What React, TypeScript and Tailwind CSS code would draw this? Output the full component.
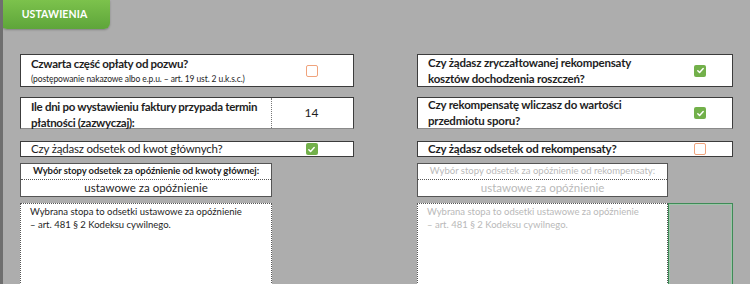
import React from 'react';

const font = { fontFamily: 'Lato, "Liberation Sans", sans-serif' };

function Box({ checked }: { checked: boolean }) {
  if (checked) {
    return (
      <span className="flex h-[12px] w-[12px] items-center justify-center rounded-[2px] bg-[#72b04a]">
        <svg width="9" height="9" viewBox="0 0 10 10" fill="none">
          <path d="M2 5.2l2 2 4-4.4" stroke="#fff" strokeWidth="1.6" strokeLinecap="round" strokeLinejoin="round" />
        </svg>
      </span>
    );
  }
  return <span className="block h-[12px] w-[12px] rounded-[2px] border-[1.5px] border-[#f0a37c] bg-white" />;
}

export default function App() {
  return (
    <div className="relative h-[284px] w-[750px] overflow-hidden bg-[#adadad] text-[#1e1e1e]" style={font}>
      <div className="absolute left-0 top-0 h-full w-[3px] bg-[#6f6f6f]" />

      {/* tab */}
      <div className="ml-[1px] flex h-[29px] w-[109px] items-center justify-center rounded-b-[6px] bg-gradient-to-b from-[#7cc24c] to-[#5ea53a] shadow-[0_1px_2px_rgba(0,0,0,0.25)]">
        <span className="mr-[2px] text-[10.5px] font-bold tracking-[0.1px] text-white">USTAWIENIA</span>
      </div>

      <div className="mt-[25px] flex">
        {/* left column */}
        <div className="ml-[20px] flex w-[334px] flex-col">
          <div className="flex h-[33px] items-center border border-[#3c3c3c] bg-white pl-[10px]">
            <div className="flex-1 leading-none">
              <div className="text-[11.5px] font-bold tracking-[-0.3px]">Czwarta część opłaty od pozwu?</div>
              <div className="mt-[5px] text-[8.5px] tracking-[-0.1px]">(postępowanie nakazowe albo e.p.u. – art. 19 ust. 2 u.k.s.c.)</div>
            </div>
            <div className="flex w-[82px] justify-center pr-[1px]">
              <Box checked={false} />
            </div>
          </div>

          <div className="mt-[10px] flex h-[32px] border border-b-[#8a8a8a] border-[#3c3c3c] bg-white">
            <div className="w-[250px] pl-[10px] pt-[1px] text-[11.5px] font-bold leading-[16px] tracking-[-0.3px]">
              Ile dni po wystawieniu faktury przypada termin
              <br />
              płatności (zazwyczaj):
            </div>
            <div className="flex flex-1 items-center justify-center border-l border-dotted border-[#777] pr-[2px] text-[12px]">14</div>
          </div>

          <div className="mt-[12px] flex h-[16px] items-center border border-[#3c3c3c] bg-white pl-[10px]">
            <div className="flex-1 text-[11.5px] leading-none tracking-[-0.2px]">Czy żądasz odsetek od kwot głównych?</div>
            <div className="flex w-[82px] justify-center pr-[1px]">
              <Box checked={true} />
            </div>
          </div>

          <div className="mt-[6px] flex h-[34px] w-[252px] flex-col border border-[#555] bg-white">
            <div className="flex h-[16px] items-center justify-center border-b border-dotted border-[#555] text-[9.5px] font-bold tracking-[-0.1px]">
              Wybór stopy odsetek za opóźnienie od kwoty głównej:
            </div>
            <div className="flex flex-1 items-center justify-center text-[11.5px] leading-none">ustawowe za opóźnienie</div>
          </div>

          <div className="mt-[6px] h-[90px] w-[252px] border border-dotted border-[#555] bg-white px-[9px] pt-[1px] text-[9.5px] leading-[13px]">
            Wybrana stopa to odsetki ustawowe za opóźnienie
            <br />– art. 481 § 2 Kodeksu cywilnego.
          </div>
        </div>

        {/* right column */}
        <div className="ml-[63px] flex w-[316px] flex-col">
          <div className="flex h-[33px] items-center border border-[#3c3c3c] bg-white pl-[10px]">
            <div className="flex-1 text-[11.5px] font-bold leading-[16px] tracking-[-0.2px]">
              Czy żądasz zryczałtowanej rekompensaty
              <br />
              kosztów dochodzenia roszczeń?
            </div>
            <div className="flex w-[60px] justify-center pr-[4px]">
              <Box checked={true} />
            </div>
          </div>

          <div className="mt-[10px] flex h-[32px] items-center border border-b-[#8a8a8a] border-[#3c3c3c] bg-white pl-[10px]">
            <div className="flex-1 text-[11.5px] font-bold leading-[16px] tracking-[-0.2px]">
              Czy rekompensatę wliczasz do wartości
              <br />
              przedmiotu sporu?
            </div>
            <div className="flex w-[60px] justify-center pr-[4px]">
              <Box checked={true} />
            </div>
          </div>

          <div className="mt-[12px] flex h-[16px] items-center border border-[#3c3c3c] bg-white pl-[10px]">
            <div className="flex-1 text-[11.5px] font-bold leading-none tracking-[-0.2px]">Czy żądasz odsetek od rekompensaty?</div>
            <div className="flex w-[60px] justify-center pr-[4px]">
              <Box checked={false} />
            </div>
          </div>

          <div className="mt-[6px] flex h-[34px] w-[251px] flex-col border border-[#555] bg-white text-[#b9b9b9]">
            <div className="flex h-[16px] items-center justify-center border-b border-dotted border-[#555] text-[9.5px]">
              Wybór stopy odsetek za opóźnienie od rekompensaty:
            </div>
            <div className="flex flex-1 items-center justify-center text-[11.5px] leading-none">ustawowe za opóźnienie</div>
          </div>

          <div className="mt-[6px] flex h-[90px]">
            <div className="w-[251px] border border-dotted border-[#555] bg-white px-[9px] pt-[1px] text-[9.5px] leading-[13px] text-[#b9b9b9]">
              Wybrana stopa to odsetki ustawowe za opóźnienie
              <br />– art. 481 § 2 Kodeksu cywilnego.
            </div>
            <div className="w-[65px] border border-[#3f8a57] shadow-[inset_0_0_0_1px_#9cc7a8]" />
          </div>
        </div>
      </div>
    </div>
  );
}
